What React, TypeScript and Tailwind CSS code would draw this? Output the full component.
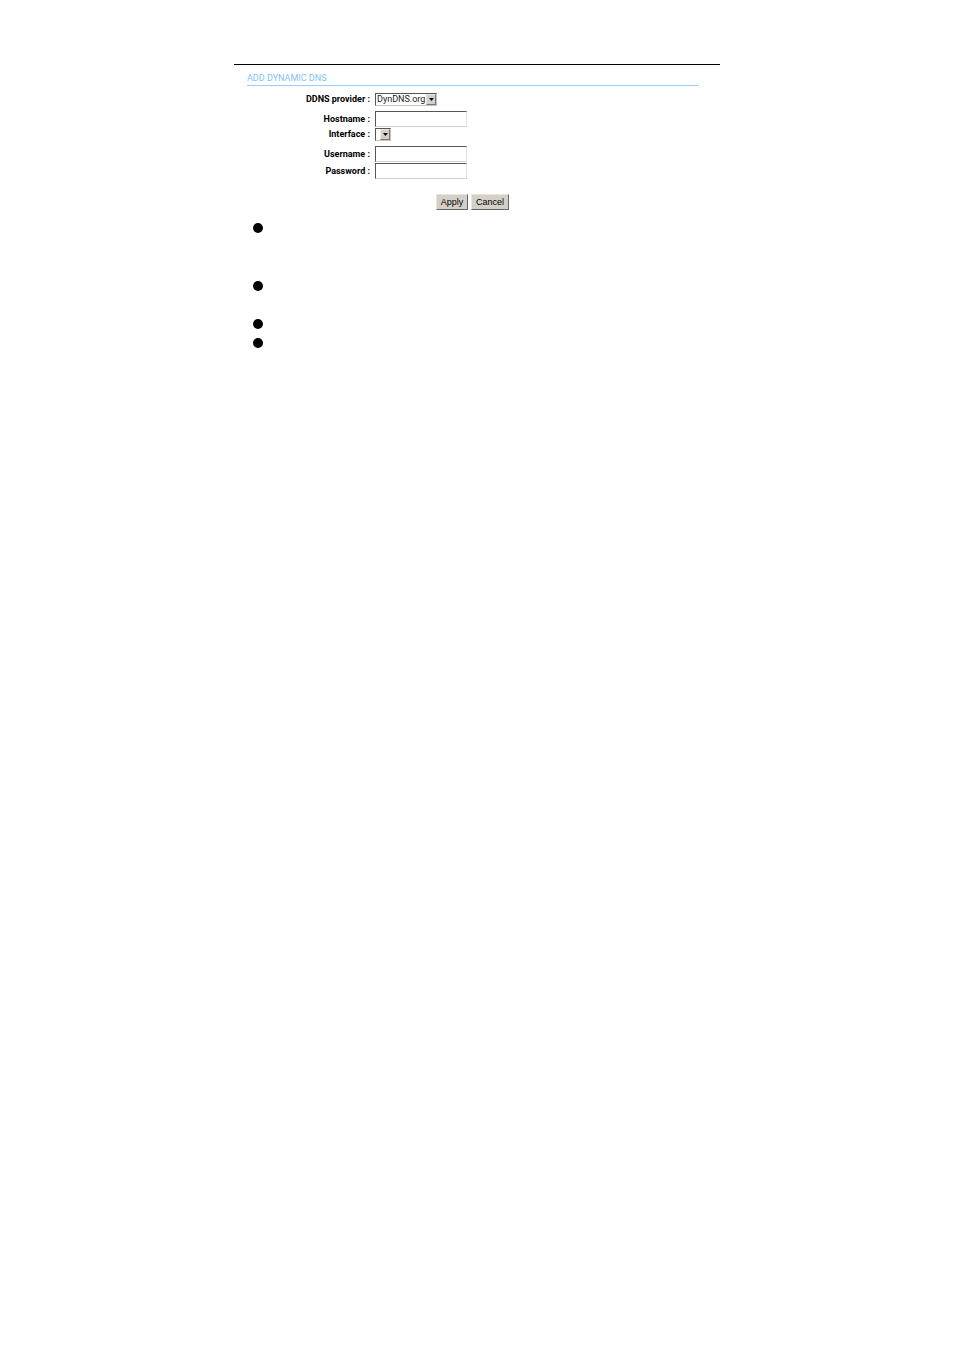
import type { ReactNode } from 'react';

const inputClass =
  'block h-4 w-[92px] border border-t-[#555] border-l-[#555] border-r-[#e0e0e0] border-b-[#d4d0c8] bg-white px-px text-[9px] outline-none';

function Row({
  id,
  label,
  className,
  children,
}: {
  id: string;
  label: string;
  className: string;
  children: ReactNode;
}) {
  return (
    <div className={`flex items-center gap-[5px] ${className}`}>
      <label
        htmlFor={id}
        className="w-[123px] text-right font-[Roboto,sans-serif] text-[9px] leading-[13px] font-bold whitespace-nowrap"
      >
        {label} :
      </label>
      {children}
    </div>
  );
}

function Select({
  id,
  className,
  options,
}: {
  id: string;
  className: string;
  options: string[];
}) {
  return (
    <div className={`relative ${className}`}>
      <select
        id={id}
        className="block h-[13px] w-full appearance-none border border-t-[#555] border-l-[#555] border-r-[#c8c4bc] border-b-[#c8c4bc] bg-white pl-px font-[Roboto,sans-serif] text-[9px] leading-[11px] text-[#222] outline-none"
      >
        {options.map((option) => (
          <option key={option}>{option}</option>
        ))}
      </select>
      <span className="pointer-events-none absolute top-px right-px flex h-[11px] w-2.5 items-center justify-center border border-t-[#e8e6e0] border-l-[#e8e6e0] border-r-[#777] border-b-[#777] bg-[#d4d0c8]">
        <svg width="5" height="3" viewBox="0 0 5 3" aria-hidden="true">
          <path d="M0 0h5L2.5 3z" />
        </svg>
      </span>
    </div>
  );
}

function Button({ children, className }: { children: ReactNode; className: string }) {
  return (
    <button
      type="button"
      className={`h-4 border border-t-[#e8e6e0] border-l-[#e8e6e0] border-r-[#666] border-b-[#666] bg-[#d4d0c8] text-center text-[9px] leading-[14px] ${className}`}
    >
      {children}
    </button>
  );
}

export default function App() {
  return (
    <main className="bg-white px-4 pt-16 font-['Liberation_Sans',Arial,sans-serif] text-black">
      <div className="mx-auto max-w-[486px] border-t border-black">
        <form className="mr-[22px] ml-[13px]">
          <h1 className="border-b border-[#99ccff] pt-[7px] font-[Roboto,sans-serif] text-[9px] leading-[13px] text-[#7fc1fb]">
            ADD DYNAMIC DNS
          </h1>

          <div className="mt-[7px]">
            <Row id="provider" label="DDNS provider" className="mb-[5px]">
              <Select id="provider" className="w-[62px]" options={['DynDNS.org']} />
            </Row>
            <Row id="hostname" label="Hostname" className="mb-px">
              <input id="hostname" type="text" className={inputClass} />
            </Row>
            <Row id="interface" label="Interface" className="mb-[5px]">
              <Select id="interface" className="w-4" options={[]} />
            </Row>
            <Row id="username" label="Username" className="mb-px">
              <input id="username" type="text" className={inputClass} />
            </Row>
            <Row id="password" label="Password" className="">
              <input id="password" type="password" className={inputClass} />
            </Row>
          </div>

          <div className="mt-[15px] flex justify-center gap-[3px]">
            <Button className="w-8">Apply</Button>
            <Button className="w-[38px]">Cancel</Button>
          </div>
        </form>

        <ul className="mt-[13px] ml-[19px]">
          <li className="mb-12 size-2.5 rounded-full bg-black" />
          <li className="mb-7 size-2.5 rounded-full bg-black" />
          <li className="mb-[9px] size-2.5 rounded-full bg-black" />
          <li className="size-2.5 rounded-full bg-black" />
        </ul>
      </div>
    </main>
  );
}
